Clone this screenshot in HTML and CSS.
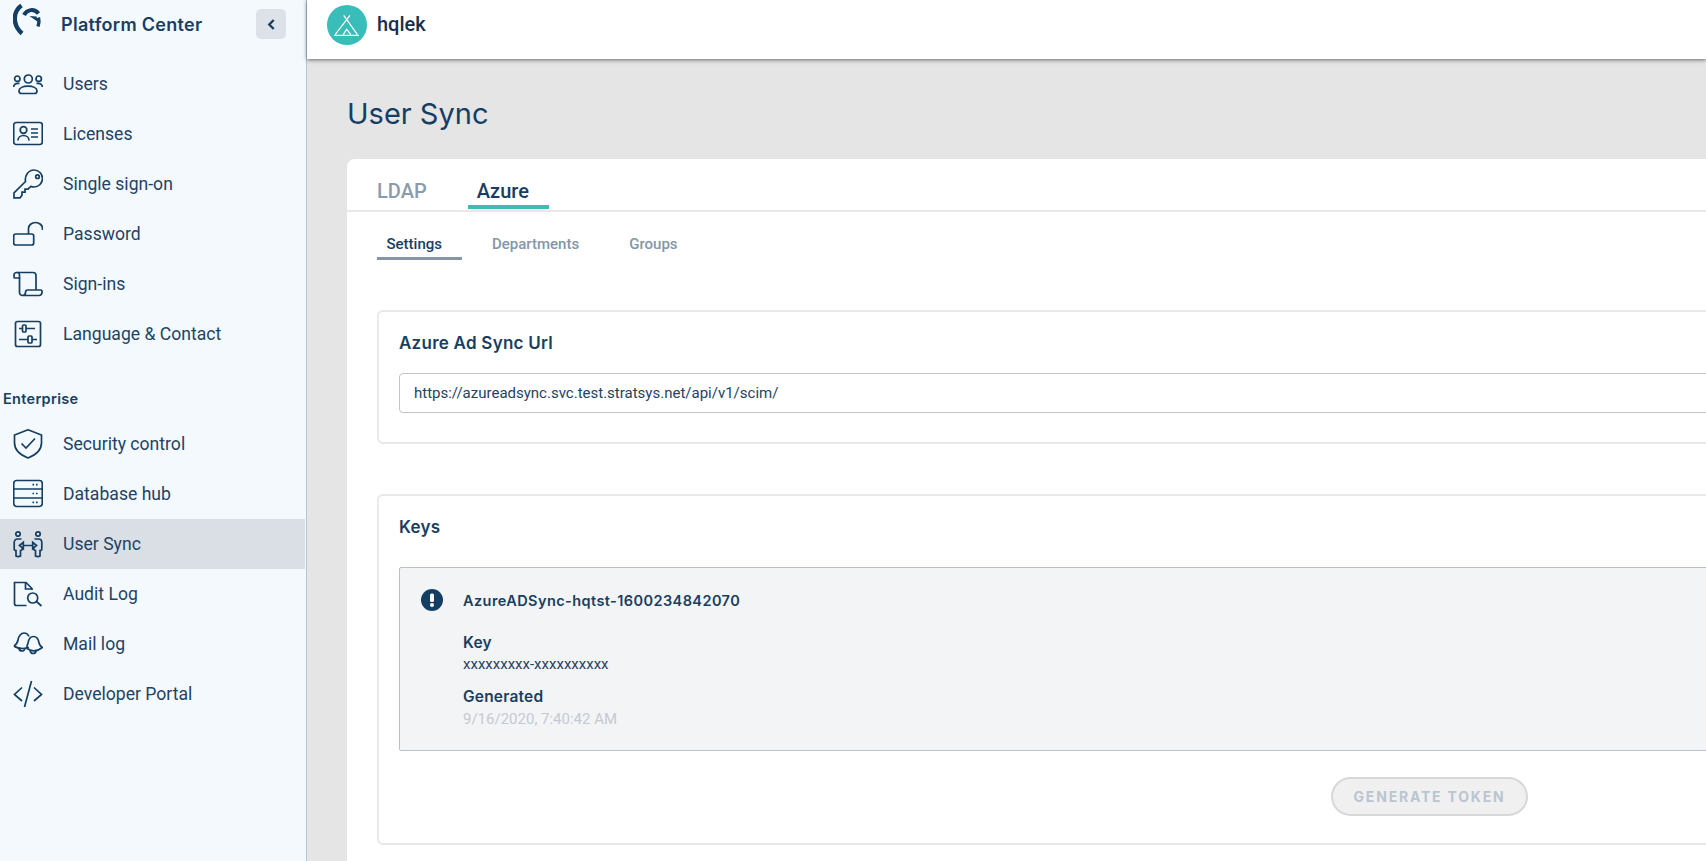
FILE: index.html
```html
<!DOCTYPE html>
<html lang="en">
<head>
    <meta charset="UTF-8">
    <title>User Sync</title>
    <link rel="stylesheet" href="styles.css">
</head>
<body>
    <aside class="sidebar">
        <div class="brand">
            <svg class="logo" viewBox="0 0 30 36" width="30" height="36">
                <path d="M8.500 3.500C.5 9-1.500 22 9 31.500" fill="none" stroke="#143f63" stroke-width="4.400"/>
                <path d="M11 13C14 7.500 21 6 25.500 11.500" fill="none" stroke="#143f63" stroke-width="4"/>
                <path d="M16.500 14l7 .5 1.500 5.500z" fill="#143f63"/>
                <path d="M25.500 15.500c.8 3 .6 6-.5 9" fill="none" stroke="#143f63" stroke-width="3.400"/>
            </svg>
            <span class="brand-name">Platform Center</span>
            <button class="collapse">
                <svg viewBox="0 0 10 14" width="9" height="13"><path d="M7.500 2L2.500 7l5 5" fill="none" stroke="#143f63" stroke-width="2.600"/></svg>
            </button>
        </div>

        <nav class="nav">
            <a class="nav-item">
                <svg class="icon" viewBox="0 0 30 30"><circle cx="15.300" cy="10" r="4"/><circle cx="4.300" cy="9.700" r="2.700"/><circle cx="25.700" cy="9.700" r="2.700"/><path d="M8.500 24.500h13a2.500 2.500 0 0 0 2.500-2.500c0-3-4-4.800-9-4.800S6 19 6 22a2.500 2.500 0 0 0 2.500 2.500z"/><path d="M.7 18c0-2 1.800-3.700 4.300-3.700h1.500M29.300 18c0-2-1.800-3.700-4.300-3.700h-1.500"/></svg>
                Users
            </a>
            <a class="nav-item">
                <svg class="icon" viewBox="0 0 30 30"><rect x=".7" y="3.500" width="28.600" height="22" rx="2.500"/><circle cx="10.500" cy="11" r="3.300"/><path d="M5 21.500c0-3 2.500-5 5.500-5s5.500 2 5.500 5M18 10h7M18 14h7M18 18h7"/></svg>
                Licenses
            </a>
            <a class="nav-item">
                <svg class="icon" viewBox="0 0 30 30"><path d="M12.500 12.500C11.500 6.500 15.500 1 21 1a8.500 8.500 0 0 1 0 17c-1 0-2.200-.2-3.200-.6L15 20.200h-3v3H9v3l-2 2.600H1v-5z"/><circle cx="24.500" cy="7.700" r="1.800"/></svg>
                Single sign-on
            </a>
            <a class="nav-item">
                <svg class="icon" viewBox="0 0 30 30"><rect x=".7" y="15" width="20" height="11" rx="2"/><path d="M15.500 15V9.500a7 6 0 0 1 14 0v1.500"/></svg>
                Password
            </a>
            <a class="nav-item">
                <svg class="icon" viewBox="0 0 30 30"><path d="M3.500 3.500H20a3 3 0 0 1 3 3V21M3.500 3.500A2.500 2.500 0 0 0 1 6v2a1 1 0 0 0 1 1h5.500M6.500 6v17.500a3 3 0 0 0 3 3H26a3 3 0 0 0 3-3V22a1 1 0 0 0-1-1H14.500c-1.500 0-2 1-2 2.500s-.8 3-3 3M6.500 6a2.500 2.500 0 0 0-3-2.500"/></svg>
                Sign-ins
            </a>
            <a class="nav-item">
                <svg class="icon" viewBox="0 0 30 30"><rect x="2.500" y="2.500" width="25" height="25" rx="2"/><path d="M6 9.500h3.500M13 9.500h9M6 20.500h9M19 20.500h5"/><rect x="9.500" y="6" width="3.500" height="7" rx="1"/><rect x="15" y="17" width="4" height="7" rx="1"/></svg>
                Language &amp; Contact
            </a>
        </nav>

        <div class="nav-heading">Enterprise</div>

        <nav class="nav">
            <a class="nav-item">
                <svg class="icon" viewBox="0 0 30 30"><path d="M15 .8L28.500 6v8c0 7-6 12-13.500 15C7.500 26 1.500 21 1.500 14V6z"/><path d="M8.500 14.500l4.500 4.500 9-9.500"/></svg>
                Security control
            </a>
            <a class="nav-item">
                <svg class="icon" viewBox="0 0 30 30"><rect x=".7" y="1.500" width="28.600" height="26" rx="3"/><path d="M.7 10h28.600M.7 19h28.600"/><path class="dots" d="M19.500 5.700h1.600M23 5.700h1.600M19.500 14.500h1.600M23 14.500h1.600M19.500 23.300h1.600M23 23.300h1.600"/></svg>
                Database hub
            </a>
            <a class="nav-item active">
                <svg class="icon" viewBox="0 0 30 30"><circle cx="5" cy="5" r="2.200"/><circle cx="25" cy="5" r="2.200"/><path d="M8.500 10H4.500C2.500 10 1.200 11.500 1.200 13.500V20c0 1 .6 1.500 1.800 1.500V27c0 .8 4.500.8 4.500 0v-5.500c1.500-.2 2-1 2-2.500M21.500 10h4c2 0 3.300 1.500 3.300 3.500V20c0 1-.6 1.500-1.800 1.500V27c0 .8-4.500.8-4.500 0v-5.500c-1.500-.2-2-1-2-2.500M10 16.500h10"/><path d="M6.500 16.500l3.800-3.200v6.400zM23.500 16.500l-3.800-3.200v6.400z"/></svg>
                User Sync
            </a>
            <a class="nav-item">
                <svg class="icon" viewBox="0 0 30 30"><path d="M13.500 26.500H3.500a2 2 0 0 1-2-2V3.500H13l6 6v1.500M12.500 3.500v6.500H19"/><circle cx="19.700" cy="19" r="5"/><path d="M23.500 22.500l5 4.500"/></svg>
                Audit Log
            </a>
            <a class="nav-item">
                <svg class="icon" viewBox="0 0 30 30"><path d="M1 17c2.500-1.500 3.500-3 4-6 .6-4 3.200-7 6-7 2.500 0 4 1.200 5 3.500M1 17c2 1.500 5 2.500 9 2.500l6-1"/><path d="M14 19.500c-.5-2 .5-3.500 1-5.500.6-3.500 2.500-6.500 5.500-6.500s5 3 5.500 6.500c.4 2 1.400 3 3.300 4.500-3 2.500-6 3.500-9 3.300-2.200-.1-4.300-1-6.300-2.300z"/><path d="M5.500 18.500c.5 2.500 2 3.500 3.500 3.500s2.500-.8 3-2.500M17 21.500c.5 2 1.500 3 3 3s3-1 3.500-3.500"/></svg>
                Mail log
            </a>
            <a class="nav-item">
                <svg class="icon" viewBox="0 0 30 30"><path d="M9 8.500L1.500 15.500 9 22M21 8.500l7.500 7L21 22M18.500 2l-7 26"/></svg>
                Developer Portal
            </a>
        </nav>
    </aside>

    <div class="main">
        <header class="topbar">
            <svg class="tenant-logo" viewBox="0 0 40 40" width="40" height="40">
                <circle cx="20" cy="20" r="20" fill="#38bdb9"/>
                <path d="M16.700 10.300L30.300 29.300M23 10.300L8.300 29.300M7 30.300h25M16.300 29.300l3.400-5 4 5" fill="none" stroke="#fff" stroke-width="1.200"/>
            </svg>
            <span class="tenant-name">hqlek</span>
        </header>

        <section class="content">
            <h1 class="page-title">User Sync</h1>

            <div class="panel">
                <div class="tabs">
                    <a class="tab">LDAP</a>
                    <a class="tab current">Azure</a>
                </div>
                <div class="subtabs">
                    <a class="subtab current">Settings</a>
                    <a class="subtab">Departments</a>
                    <a class="subtab">Groups</a>
                </div>

                <div class="card url-card">
                    <h2 class="card-title">Azure Ad Sync Url</h2>
                    <input class="url-input" type="text" value="https://azureadsync.svc.test.stratsys.net/api/v1/scim/" readonly>
                </div>

                <div class="card keys-card">
                    <h2 class="card-title">Keys</h2>
                    <div class="key-box">
                        <svg class="alert" viewBox="0 0 22 22" width="22" height="22">
                            <circle cx="11" cy="11" r="11" fill="#143f63"/>
                            <rect x="9" y="4.500" width="4" height="8.500" rx="1.500" fill="#fff"/>
                            <circle cx="11" cy="16" r="2" fill="#fff"/>
                        </svg>
                        <div class="key-info">
                            <div class="key-name">AzureADSync-hqtst-1600234842070</div>
                            <div class="key-label">Key</div>
                            <div class="key-value">xxxxxxxxx-xxxxxxxxxx</div>
                            <div class="key-label gen">Generated</div>
                            <div class="key-date">9/16/2020, 7:40:42 AM</div>
                        </div>
                    </div>
                    <div class="actions">
                        <button class="generate" disabled>GENERATE TOKEN</button>
                    </div>
                </div>
            </div>
        </section>
    </div>
</body>
</html>
```

FILE: styles.css
```css
html, body {
    height: 100%;
}
body {
    margin: 0;
    display: flex;
    overflow: hidden;
    background: #e5e5e5;
    color: #1a3e5f;
    font-family: Roboto, Arial, sans-serif;
}

/* sidebar */
.sidebar {
    flex: 0 0 306px;
    width: 306px;
    height: 861px;
    background: #f3f9fd;
    border-right: 1px solid #b9c5d0;
    box-sizing: content-box;
}
.brand {
    display: flex;
    align-items: center;
    height: 48px;
    padding-left: 13px;
}
.logo {
    margin-top: -8px;
}
.brand-name {
    margin-left: 18px;
    font-family: Inter, Arial, sans-serif;
    font-weight: 600;
    font-size: 18px;
    letter-spacing: 0.3px;
    width: 195px;
    white-space: nowrap;
}
.collapse {
    width: 30px;
    height: 30px;
    padding: 0;
    border: none;
    border-radius: 5px;
    background: #dde1e8;
    display: flex;
    align-items: center;
    justify-content: center;
}
.nav {
    display: flex;
    flex-direction: column;
}
.brand + .nav {
    margin-top: 11px;
}
.nav-item {
    display: flex;
    align-items: center;
    height: 50px;
    width: 305px;
    padding-left: 13px;
    box-sizing: border-box;
    font-size: 17.600px;
    color: #1f4363;
}
.nav-item.active {
    background: #dadfe6;
}
.icon {
    width: 30px;
    height: 30px;
    margin-right: 20px;
    fill: none;
    stroke: #143f63;
    stroke-width: 1.700;
}
.nav-heading {
    margin: 29px 0 0 3px;
    height: 31px;
    font-family: Inter, Arial, sans-serif;
    font-weight: 600;
    font-size: 14.500px;
    letter-spacing: 0.3px;
    line-height: 22px;
}

/* main area */
.main {
    flex: 1;
    min-width: 0;
}
.topbar {
    display: flex;
    align-items: center;
    height: 59px;
    padding: 0 0 10px 20px;
    box-sizing: border-box;
    background: #fff;
    box-shadow: 0 1px 4px rgba(0, 0, 0, 0.55);
}
.tenant-name {
    margin-left: 10px;
    margin-top: -2px;
    font-weight: 500;
    font-size: 20px;
    color: #1a2f4a;
}
.content {
    padding: 34px 0 0 40px;
}
.page-title {
    margin: 0 0 24px;
    font-family: Inter, Arial, sans-serif;
    font-weight: 400;
    font-size: 29px;
    line-height: 42px;
    color: #163e62;
}
.panel {
    width: 2152px;
    background: #fff;
    border-radius: 8px 8px 0 0;
    padding-top: 16px;
    height: 720px;
}
.tabs {
    display: flex;
    height: 35px;
    border-bottom: 2px solid #e8e8e8;
}
.tab {
    margin-left: 30px;
    font-weight: 500;
    font-size: 20px;
    line-height: 32px;
    color: #8a9bad;
}
.tab.current {
    margin-left: 41px;
    padding: 0 20px 0 9px;
    height: 34px;
    box-sizing: border-box;
    border-bottom: 4px solid #38bdb9;
    color: #1a3e5f;
}
.subtabs {
    display: flex;
    margin: 20px 0 51px 30px;
    height: 27px;
}
.subtab {
    padding: 0 20px 0 0;
    margin-right: 30px;
    font-weight: 500;
    font-size: 15px;
    line-height: 24px;
    color: #8496a8;
}
.subtab.current {
    padding: 0 20px 0 9.500px;
    margin-right: 30px;
    height: 28px;
    box-sizing: border-box;
    border-bottom: 3px solid #8496a8;
    color: #1a3e5f;
}
.card {
    margin-left: 30px;
    width: 2105px;
    border: 2px solid #e9e9e9;
    border-radius: 6px;
    box-sizing: border-box;
    padding: 18px 20px 0;
}
.url-card {
    height: 134px;
    margin-bottom: 50px;
}
.keys-card {
    height: 351px;
}
.card-title {
    margin: 0;
    font-family: Inter, Arial, sans-serif;
    font-weight: 600;
    font-size: 17px;
    letter-spacing: 0.25px;
    line-height: 26px;
    color: #1a3e5f;
}
.url-input {
    display: block;
    margin-top: 17px;
    width: 100%;
    height: 40px;
    padding: 0 14px;
    box-sizing: border-box;
    border: 1px solid #c4c4c4;
    border-radius: 4px;
    background: #fff;
    font-family: Roboto, Arial, sans-serif;
    font-size: 15px;
    color: #27425f;
    outline: none;
}
.key-box {
    display: flex;
    margin-top: 27px;
    height: 184px;
    box-sizing: border-box;
    padding: 21px 21px 0;
    background: #f3f4f6;
    border: 1px solid #afc3d3;
    border-radius: 2px;
}
.alert {
    flex: none;
}
.key-info {
    margin-left: 20px;
}
.key-name {
    font-family: Inter, Arial, sans-serif;
    font-weight: 600;
    font-size: 14.500px;
    letter-spacing: 0.42px;
    line-height: 22px;
    padding-top: 1px;
    color: #1a3e5f;
}
.key-label {
    margin-top: 20px;
    font-family: Inter, Arial, sans-serif;
    font-weight: 600;
    font-size: 15.500px;
    letter-spacing: 0.2px;
    line-height: 22px;
}
.key-label.gen {
    margin-top: 11px;
}
.key-value {
    margin-top: -1px;
    font-size: 15px;
    line-height: 22px;
    color: #27425f;
}
.key-date {
    font-size: 15px;
    line-height: 22px;
    color: #c3cad2;
}
.actions {
    display: flex;
    justify-content: center;
    margin-top: 26px;
}
.generate {
    width: 197px;
    height: 39px;
    padding: 0;
    border: 2px solid #d8d8d8;
    border-radius: 20px;
    background: #f0f0f0;
    font-family: Inter, Arial, sans-serif;
    font-weight: 700;
    font-size: 14px;
    letter-spacing: 1.800px;
    color: #b9c5d0;
}
```
